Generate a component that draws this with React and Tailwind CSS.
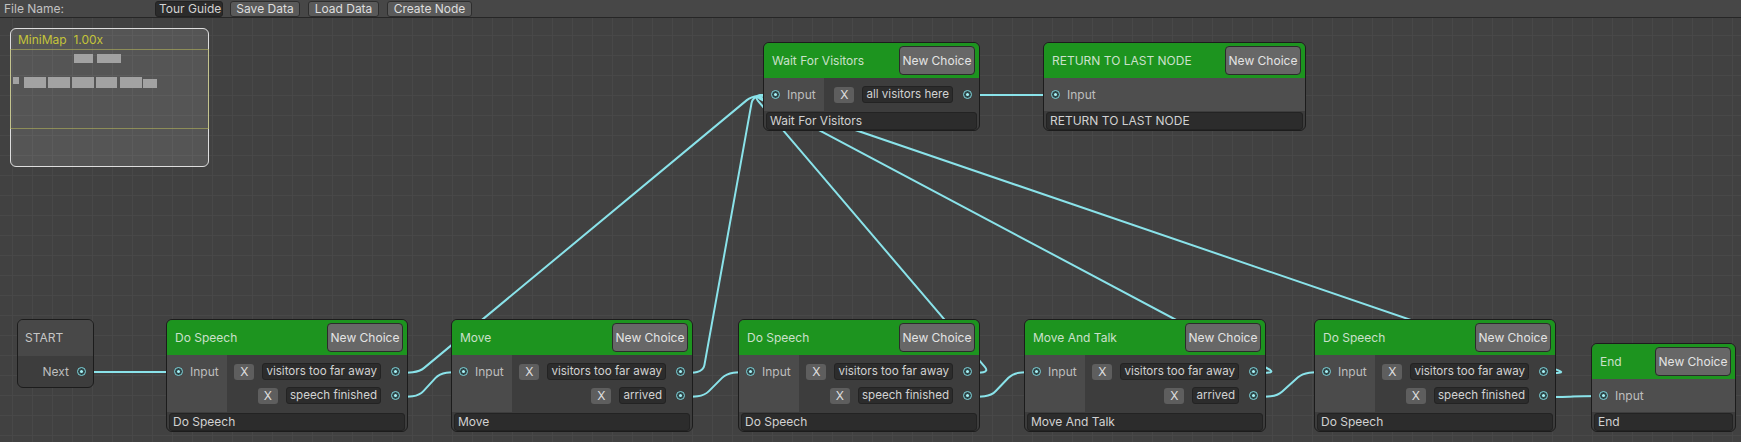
import React from "react";

const EDGE = "#8ae3ea";

// Edge like GraphView: curved stubs leaving/entering the ports horizontally, straight run between
const edgePath = (x1, y1, x2, y2, k = 22, r = 8) => {
  const ax = x1 + k;
  const bx = x2 - k;
  const dx = bx - ax;
  const dy = y2 - y1;
  const len = Math.hypot(dx, dy) || 1;
  const ux = dx / len;
  const uy = dy / len;
  return [
    `M ${x1} ${y1}`,
    `C ${x1 + k * 0.6} ${y1} ${ax} ${y1} ${ax + ux * r} ${y1 + uy * r}`,
    `L ${bx - ux * r} ${y2 - uy * r}`,
    `C ${bx} ${y2} ${x2 - k * 0.6} ${y2} ${x2} ${y2}`,
  ].join(" ");
};

const WFV_IN = [775, 95];

const edges = [
  [82, 372, 178, 372],
  [396, 373, ...WFV_IN],
  [396, 397, 463, 372],
  [681, 373, ...WFV_IN],
  [681, 397, 750, 372],
  [968, 373, ...WFV_IN],
  [968, 397, 1036, 372],
  [1254, 373, ...WFV_IN],
  [1254, 397, 1326, 372],
  [1544, 373, ...WFV_IN],
  [1544, 397, 1602, 396],
  [968, 95, 1055, 95],
];

const Port = () => (
  <span className="flex h-[9px] w-[9px] shrink-0 items-center justify-center rounded-full border-[1.5px] border-[#7fd3da] bg-[#2f4446]">
    <span className="h-[3px] w-[3px] rounded-full bg-[#a6f2f6]" />
  </span>
);

const NewChoice = () => (
  <button className="flex h-[29px] w-[76px] items-center justify-center rounded-[4px] border border-[#2b2b2b] bg-[#676767] text-[#e4e4e4]">
    New Choice
  </button>
);

const Header = ({ title }) => (
  <div className="flex h-[35px] items-center justify-between bg-[#1d941f] pl-[8px] pr-[4px]">
    <span className="text-[#cbe0cb]">{title}</span>
    <NewChoice />
  </div>
);

const Footer = ({ title }) => (
  <div className="h-[19px] px-[2px] pt-[1px]">
    <div className="flex h-[18px] items-center rounded-[3px] border border-[#232323] bg-[#2c2c2c] pl-[3px] text-[#d2d2d2]">
      {title}
    </div>
  </div>
);

const InputRow = () => (
  <div className="flex h-[17px] items-center gap-[7px] pl-[7px]">
    <Port />
    <span className="text-[#bebebe]">Input</span>
  </div>
);

const Choice = ({ label }) => (
  <div className="flex h-[17px] items-center">
    <div className="mr-[8px] flex h-[16px] w-[20px] items-center justify-center rounded-[3px] bg-[#5e5e5e] text-[#dedede]">
      X
    </div>
    <div className="flex h-[17px] items-center rounded-[3px] border border-[#232323] bg-[#2c2c2c] px-[3px] text-[11.6px] text-[#d2d2d2]">
      {label}
    </div>
    <span className="ml-[10px]">
      <Port />
    </span>
  </div>
);

const ChoiceNode = ({ title, choices, className }) => (
  <div
    className={`absolute overflow-hidden rounded-[6px] border border-[#1c1c1c] bg-[#3d3d3d] ${className}`}
  >
    <Header title={title} />
    <div className="flex">
      <div className="w-[60px] shrink-0 bg-[#4b4b4b] pt-[8px]">
        <InputRow />
      </div>
      <div className="flex flex-1 flex-col items-end gap-[7px] pb-[8px] pr-[7px] pt-[8px]">
        {choices.map((c) => (
          <Choice key={c} label={c} />
        ))}
      </div>
    </div>
    <Footer title={title} />
  </div>
);

const PlainNode = ({ title, className }) => (
  <div
    className={`absolute overflow-hidden rounded-[6px] border border-[#1c1c1c] bg-[#3d3d3d] ${className}`}
  >
    <Header title={title} />
    <div className="flex h-[33px] items-center bg-[#4e4e4e]">
      <InputRow />
    </div>
    <Footer title={title} />
  </div>
);

const MiniMap = () => (
  <div className="absolute left-[10px] top-[10px] h-[139px] w-[199px] rounded-[6px] border border-[#dedede] bg-[#ffffff1c]">
    <div className="whitespace-pre pl-[7px] pt-[5px] text-[12px] text-[#c4c43a]">
      MiniMap  1.00x
    </div>
    {/* view frame and node thumbnails sit at their map positions */}
    <div className="absolute left-[-1px] top-[20px] h-[80px] w-[199px] border border-[#b3b35a99]" />
    <div className="absolute left-[63px] top-[25px] h-[9px] w-[19px] bg-[#a2a2a2]" />
    <div className="absolute left-[86px] top-[25px] h-[9px] w-[24px] bg-[#a2a2a2]" />
    <div className="absolute left-[2px] top-[48px] h-[7px] w-[6px] bg-[#a2a2a2]" />
    <div className="absolute left-[13px] top-[48px] h-[11px] w-[22px] bg-[#a2a2a2]" />
    <div className="absolute left-[37px] top-[48px] h-[11px] w-[22px] bg-[#a2a2a2]" />
    <div className="absolute left-[61px] top-[48px] h-[11px] w-[22px] bg-[#a2a2a2]" />
    <div className="absolute left-[85px] top-[48px] h-[11px] w-[21px] bg-[#a2a2a2]" />
    <div className="absolute left-[109px] top-[48px] h-[11px] w-[22px] bg-[#a2a2a2]" />
    <div className="absolute left-[132px] top-[50px] h-[9px] w-[14px] bg-[#a2a2a2]" />
  </div>
);

const ToolButton = ({ children, w }) => (
  <button
    className={`flex h-[16px] items-center justify-center rounded-[3px] border border-[#2d2d2d] bg-[#5a5a5a] text-[#dedede] ${w}`}
  >
    {children}
  </button>
);

export default function App() {
  return (
    <div className="relative h-[442px] w-[1741px] overflow-hidden bg-[#414141] font-['Inter',sans-serif] text-[12px] leading-none">
      {/* toolbar */}
      <div className="flex h-[18px] items-center border-b border-[#262626] bg-[#474747] pl-[4px]">
        <span className="w-[151px] text-[#c2c2c2]">File Name:</span>
        <div className="flex h-[16px] w-[68px] items-center rounded-[3px] border border-[#222] bg-[#2b2b2b] pl-[3px] text-[#d2d2d2]">
          Tour Guide
        </div>
        <div className="ml-[7px] flex gap-[8px]">
          <ToolButton w="w-[70px]">Save Data</ToolButton>
          <ToolButton w="w-[71px]">Load Data</ToolButton>
          <ToolButton w="w-[85px]">Create Node</ToolButton>
        </div>
      </div>

      {/* graph canvas */}
      <div className="relative h-[424px] w-full">
        <svg className="absolute inset-0" width="1741" height="424">
          <defs>
            <pattern id="grid" width="20" height="20" patternUnits="userSpaceOnUse" x="12" y="-3">
              <path d="M 0.5 0 L 0.5 20 M 0 0.5 L 20 0.5" stroke="#484848" strokeWidth="1" fill="none" />
            </pattern>
          </defs>
          <rect width="1741" height="424" fill="url(#grid)" />
          <g transform="translate(0,-18)" fill="none" stroke={EDGE} strokeWidth="2" strokeLinejoin="round">
            {edges.map((e, i) => (
              <path key={i} d={edgePath(...e)} />
            ))}
          </g>
        </svg>

        <MiniMap />

        {/* start */}
        <div className="absolute left-[17px] top-[301px] w-[77px] overflow-hidden rounded-[6px] border border-[#1c1c1c] bg-[#3d3d3d]">
          <div className="flex h-[36px] items-center bg-[#484848] pl-[7px] text-[#c6c6c6]">START</div>
          <div className="flex h-[31px] items-center justify-end gap-[8px] pr-[7px]">
            <span className="text-[#bebebe]">Next</span>
            <Port />
          </div>
        </div>

        <ChoiceNode
          title="Do Speech"
          className="left-[166px] top-[301px] w-[242px]"
          choices={["visitors too far away", "speech finished"]}
        />
        <ChoiceNode
          title="Move"
          className="left-[451px] top-[301px] w-[242px]"
          choices={["visitors too far away", "arrived"]}
        />
        <ChoiceNode
          title="Do Speech"
          className="left-[738px] top-[301px] w-[242px]"
          choices={["visitors too far away", "speech finished"]}
        />
        <ChoiceNode
          title="Move And Talk"
          className="left-[1024px] top-[301px] w-[242px]"
          choices={["visitors too far away", "arrived"]}
        />
        <ChoiceNode
          title="Do Speech"
          className="left-[1314px] top-[301px] w-[242px]"
          choices={["visitors too far away", "speech finished"]}
        />
        <PlainNode title="End" className="left-[1591px] top-[325px] w-[145px]" />

        <ChoiceNode
          title="Wait For Visitors"
          className="left-[763px] top-[24px] w-[217px]"
          choices={["all visitors here"]}
        />
        <PlainNode title="RETURN TO LAST NODE" className="left-[1043px] top-[24px] w-[263px]" />
      </div>
    </div>
  );
}
